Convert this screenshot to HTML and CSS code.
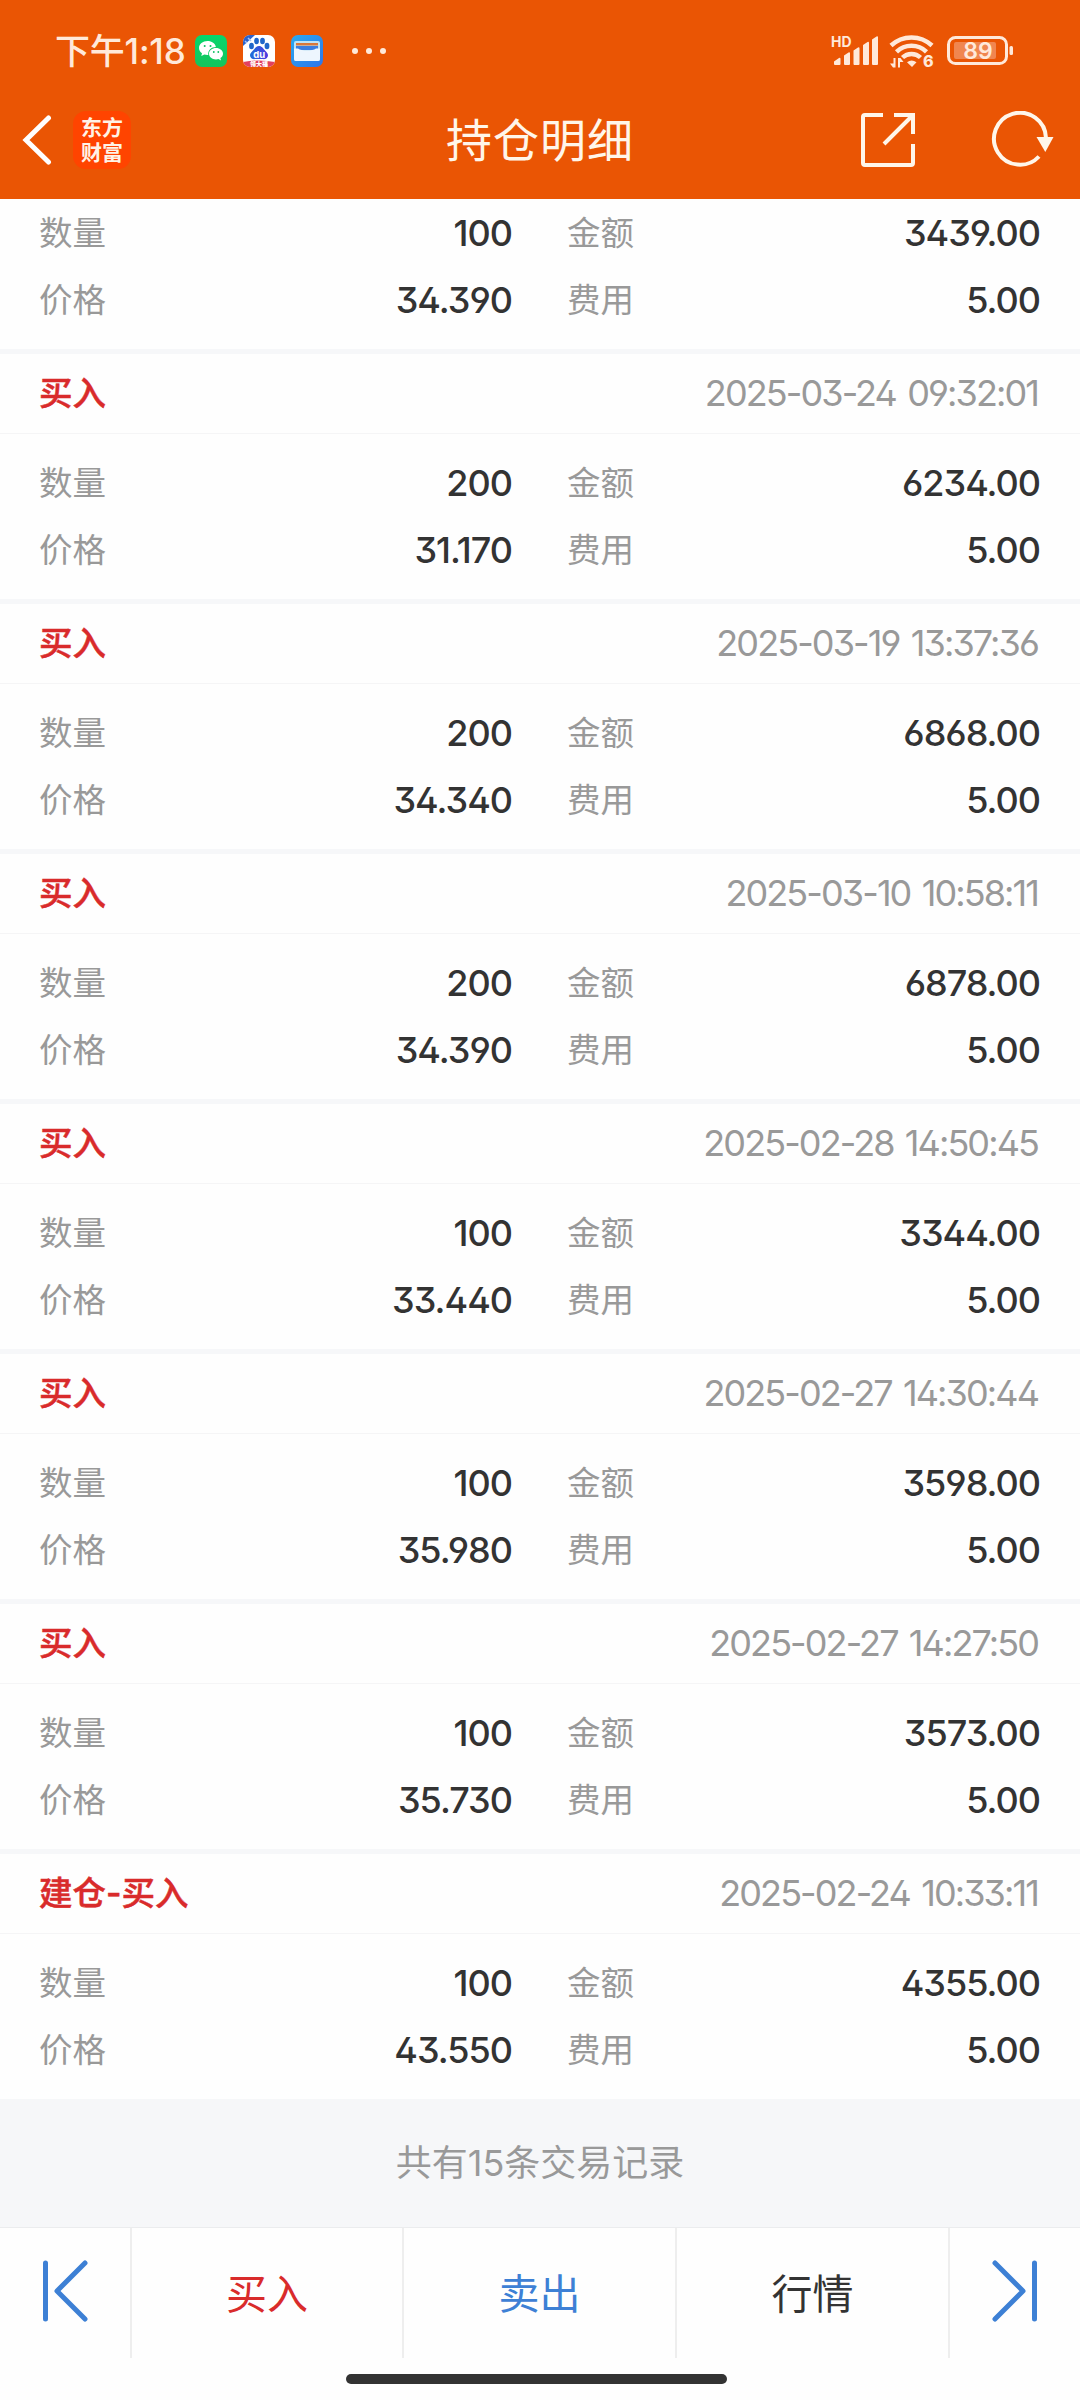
FILE: index.html
```html
<!DOCTYPE html>
<html lang="zh-CN">
<head>
<meta charset="utf-8">
<title>持仓明细</title>
<link rel="stylesheet" href="styles.css">
</head>
<body>
<header class="top">
  <div class="status">
    <span class="time">下午1:18</span>
    <svg class="app" viewBox="0 0 32 32"><defs><linearGradient id="wc" x2="0" y2="1"><stop stop-color="#05d76c"/><stop offset="1" stop-color="#14c45c"/></linearGradient></defs><rect width="32" height="32" rx="7" fill="url(#wc)"/><path d="M12.5 6C7.800 6 4 9.100 4 13c0 2.200 1.200 4 3 5.300L6.300 21l3-1.600c1 .3 2 .5 3.200.5h.8c-.7-4.500 3-7.900 7.600-7.900C20.300 8.500 16.700 6 12.500 6z" fill="#fff"/><path d="M21 13c-3.900 0-7 2.600-7 5.700s3.100 5.700 7 5.700c.9 0 1.700-.1 2.500-.4l2.500 1.400-.6-2.300c1.600-1.100 2.600-2.700 2.600-4.400 0-3.100-3.100-5.700-7-5.700z" fill="#fff"/><g fill="#0cc060"><circle cx="9.700" cy="11" r="1"/><circle cx="15.500" cy="11" r="1"/><circle cx="18.800" cy="17" r=".9"/><circle cx="23.300" cy="17" r=".9"/></g></svg>
    <svg class="app" viewBox="0 0 32 32"><defs><clipPath id="bd"><rect width="32" height="32" rx="7"/></clipPath><linearGradient id="bg" x2="1" y2="0"><stop stop-color="#1d6fd8"/><stop offset="1" stop-color="#5038e0"/></linearGradient></defs><g clip-path="url(#bd)"><rect width="32" height="32" fill="#fff"/><path d="M0 0h12L0 11z" fill="#2b62cc"/><path d="M2 6l2 2M5 3l3 3" stroke="#a8c5f5" stroke-width="1.500"/><g fill="#1f66c9"><ellipse cx="8.500" cy="11" rx="2.400" ry="3.200"/><ellipse cx="13.500" cy="6" rx="2.400" ry="3.300"/><ellipse cx="19.500" cy="6" rx="2.400" ry="3.300"/><ellipse cx="24" cy="11" rx="2.400" ry="3.200"/></g><path d="M16 11c3 0 4 2.500 6.500 5s3 4 2 6-3 2.400-5 2h-7c-2 .4-4 0-5-2s-.5-3.500 2-6S13 11 16 11z" fill="url(#bg)"/><path d="M0 27q16-3 32 0v5H0z" fill="#e2405e"/></g><text class="du" x="16.200" y="22.500">du</text><text class="tag" x="16" y="31">领大福</text></svg>
    <svg class="app" viewBox="0 0 32 32"><defs><linearGradient id="wl" x2="1" y2="1"><stop stop-color="#2aaaf0"/><stop offset="1" stop-color="#2d74ea"/></linearGradient></defs><rect width="32" height="32" rx="7" fill="url(#wl)"/><rect x="3" y="6" width="26" height="20" rx="2" fill="#bfe3f5"/><path d="M5 8h22v2.500H5z" fill="#d9773a"/><path d="M5 11h22v4H5z" fill="#3c7ee0"/><path d="M3 13.500h4q3 2 9 2t9-2h4V24q0 2-2 2H5q-2 0-2-2z" fill="#edf6fe"/></svg>
    <svg class="dots" viewBox="0 0 34 6"><g fill="#ffe9da"><circle cx="3" cy="3" r="3"/><circle cx="17" cy="3" r="3"/><circle cx="31" cy="3" r="3"/></g></svg>
    <svg class="signals" viewBox="0 0 184 34"><g fill="#ffe9da"><text class="hd" x="1" y="13">HD</text><path d="M4 27.500l5-3.500q1.500-.8 1.500 1V30q0 1-1 1H5q-1 0-1-1zM14 21.500l4.500-3q1.500-.8 1.500 1V30q0 1-1 1h-4q-1 0-1-1zM23.500 16.500l4.500-3q1.500-.8 1.500 1V30q0 1-1 1h-4q-1 0-1-1zM33 11l4.500-3q1.500-.8 1.500 1V30q0 1-1 1h-4q-1 0-1-1zM42 5.500l4.500-3q1.500-.8 1.500 1V30q0 1-1 1h-4q-1 0-1-1z"/></g>
      <g fill="none" stroke="#ffe9da" stroke-width="4.500"><path d="M61 11.500a30 30 0 0 1 41 0M66.500 17.800a21.500 21.500 0 0 1 30 0M72.500 23.500a13 13 0 0 1 18 0"/></g><path d="M77 28.200q4.500-3.500 9.500 0L82 33z" fill="#ffe9da"/><path d="M65.500 24v9.500h-2.500L60 29.500h3.500V24zM68 33.500V24h2.500l3 4H70v5.500z" fill="#ffe9da"/><text class="six" x="93" y="33">6</text>
      <rect x="118.500" y="3.500" width="58" height="26" rx="7" fill="none" stroke="#ffe9da" stroke-width="3"/><rect x="124" y="8" width="42" height="17" rx="2" fill="#f08650"/><rect x="179.500" y="12" width="3.500" height="9" rx="1.500" fill="#ffe9da"/><text class="pct" x="148" y="25">89</text></svg>
  </div>
  <div class="nav">
    <svg class="back" viewBox="0 0 30 50"><path d="M26.500 3L4 25l22.500 22" fill="none" stroke="#fff" stroke-width="5" stroke-linecap="round"/></svg>
    <div class="brand"><span>东方</span><span>财富</span></div>
    <h1 class="title">持仓明细</h1>
    <div class="actions">
      <svg class="share" viewBox="0 0 56 56"><g fill="none" stroke="#fff6ea" stroke-width="4"><path d="M23 3H5Q3 3 3 5v46q0 2 2 2h46q2 0 2-2V32"/><path d="M34 3h19v19M52 4L24 32"/></g></svg>
      <svg class="reload" viewBox="0 0 64 58"><path d="M49 45.500A26 26 0 1 1 56 27" fill="none" stroke="#fff6ea" stroke-width="4"/><path d="M46.500 26h17l-8.200 15z" fill="#fff6ea"/></svg>
    </div>
  </div>
</header>
<main class="list">
  <section class="record first"><dl class="body"><dt>数量</dt><dd>100</dd><dt>金额</dt><dd>3439.00</dd><dt>价格</dt><dd>34.390</dd><dt>费用</dt><dd>5.00</dd></dl></section>
  <section class="record"><div class="head"><b>买入</b><time>2025-03-24 09:32:01</time></div><dl class="body"><dt>数量</dt><dd>200</dd><dt>金额</dt><dd>6234.00</dd><dt>价格</dt><dd>31.170</dd><dt>费用</dt><dd>5.00</dd></dl></section>
  <section class="record"><div class="head"><b>买入</b><time>2025-03-19 13:37:36</time></div><dl class="body"><dt>数量</dt><dd>200</dd><dt>金额</dt><dd>6868.00</dd><dt>价格</dt><dd>34.340</dd><dt>费用</dt><dd>5.00</dd></dl></section>
  <section class="record"><div class="head"><b>买入</b><time>2025-03-10 10:58:11</time></div><dl class="body"><dt>数量</dt><dd>200</dd><dt>金额</dt><dd>6878.00</dd><dt>价格</dt><dd>34.390</dd><dt>费用</dt><dd>5.00</dd></dl></section>
  <section class="record"><div class="head"><b>买入</b><time>2025-02-28 14:50:45</time></div><dl class="body"><dt>数量</dt><dd>100</dd><dt>金额</dt><dd>3344.00</dd><dt>价格</dt><dd>33.440</dd><dt>费用</dt><dd>5.00</dd></dl></section>
  <section class="record"><div class="head"><b>买入</b><time>2025-02-27 14:30:44</time></div><dl class="body"><dt>数量</dt><dd>100</dd><dt>金额</dt><dd>3598.00</dd><dt>价格</dt><dd>35.980</dd><dt>费用</dt><dd>5.00</dd></dl></section>
  <section class="record"><div class="head"><b>买入</b><time>2025-02-27 14:27:50</time></div><dl class="body"><dt>数量</dt><dd>100</dd><dt>金额</dt><dd>3573.00</dd><dt>价格</dt><dd>35.730</dd><dt>费用</dt><dd>5.00</dd></dl></section>
  <section class="record"><div class="head"><b>建仓-买入</b><time>2025-02-24 10:33:11</time></div><dl class="body"><dt>数量</dt><dd>100</dd><dt>金额</dt><dd>4355.00</dd><dt>价格</dt><dd>43.550</dd><dt>费用</dt><dd>5.00</dd></dl></section>
</main>
<p class="total">共有15条交易记录</p>
<nav class="tabs">
  <a class="tab"><svg class="step" viewBox="0 0 46 64"><path d="M3.500 4v56M43 4L15 32l28 28" fill="none" stroke="#3d80d5" stroke-width="5" stroke-linecap="round" stroke-linejoin="round"/></svg></a>
  <a class="tab buy">买入</a>
  <a class="tab sell">卖出</a>
  <a class="tab">行情</a>
  <a class="tab"><svg class="step" viewBox="0 0 46 64"><path d="M42.500 4v56M3 4l28 28L3 60" fill="none" stroke="#3d80d5" stroke-width="5" stroke-linecap="round" stroke-linejoin="round"/></svg></a>
</nav>
<div class="home"></div>
</body>
</html>
```
FILE: styles.css
```css
* { box-sizing: border-box; margin: 0; padding: 0; }
body {
  width: 1080px; height: 2400px; overflow: hidden;
  display: flex; flex-direction: column;
  background: #fefefe; color: #333;
  font-family: Inter, "Noto Sans CJK SC", sans-serif;
  font-feature-settings: "cv09", "ss01";
}
svg { display: block; flex: none; }
.top { height: 199px; background: #ea5504; color: #fff6ea; }
.status { height: 82px; padding: 20px 66px 0 55px; display: flex; align-items: center; }
.time { width: 140px; font-size: 35px; font-weight: 500; line-height: 40px; letter-spacing: -.2px; white-space: nowrap; color: #ffe9da; }
.app { width: 32px; height: 32px; margin-right: 16px; }
.dots { width: 34px; height: 6px; margin-left: 13px; }
.signals { width: 184px; height: 34px; margin-left: auto; overflow: visible; }
.du { font: 700 9.5px Inter, sans-serif; fill: #fff; text-anchor: middle; }
.tag { font: 900 6px "Noto Sans CJK SC", sans-serif; fill: #fff; text-anchor: middle; }
.hd { font: 700 14px/1 Inter, sans-serif; }
.six { font: 800 16px Inter, sans-serif; fill: #ffe9da; }
.pct { font: 600 23px Inter, sans-serif; fill: #ffe9da; text-anchor: middle; }
.nav { height: 116px; padding: 0 26px 0 22px; display: grid; grid-template-columns: 198px 1fr 194px; grid-template-areas: "left title actions"; align-items: center; }
.back { grid-area: left; width: 30px; height: 50px; }
.brand { grid-area: left; width: 58px; height: 58px; margin-left: 51px; display: flex; flex-direction: column; align-items: center; justify-content: center; gap: 4px; padding-bottom: 2px; border-radius: 13px; background: #ff4400; color: #fff3e6; font: 700 21px/21px "Noto Sans CJK SC", sans-serif; }
.title { grid-area: title; text-align: center; font-size: 46px; font-weight: 400; letter-spacing: 1px; line-height: 60px; padding-bottom: 1px; }
.actions { grid-area: actions; display: flex; gap: 74px; align-items: center; }
.share { width: 56px; height: 56px; }
.reload { width: 64px; height: 58px; }
.record { border-top: 5px solid #f6f7f9; height: 250px; }
.record.first { height: 150px; border-top: 0; }
.head { height: 80px; padding: 0 40px 0 39px; display: flex; align-items: center; justify-content: space-between; border-bottom: 1px solid #f5f5f6; }
.head b { padding-bottom: 2px; color: #d92b2b; font-size: 33.500px; font-weight: 500; line-height: 50px; -webkit-text-stroke: .5px #d92b2b; }
.head time { color: #999; font-size: 36px; letter-spacing: -1.900px; word-spacing: 3px; padding: 0 2px 1px 0; }
.body { padding: 15px 40px 0 39px; display: grid; grid-template: 67px 67px / 90px 383px 145px 1fr; align-items: center; }
.first .body { padding-top: 0; }
.body dt { color: #999; font-size: 33.500px; line-height: 50px; }
.body dt:nth-of-type(even) { padding-left: 55px; }
.body dd { font-size: 36px; font-weight: 500; text-align: right; letter-spacing: -1px; }
.total { height: 128px; background: #f6f7f9; color: #999; text-align: center; font-size: 36px; line-height: 128px; }
.tabs { height: 131px; border-top: 1px solid #ebecee; display: grid; grid-template-columns: 132px 272px 273px 273px 130px; }
.tab { display: flex; align-items: center; justify-content: center; border-right: 2px solid #eee; padding-bottom: 5px; font-size: 41px; }
.tab:last-child { border-right: 0; }
.buy { color: #d92b2b; }
.sell { color: #3d80d5; }
.step { width: 46px; height: 64px; }
.home { width: 381px; height: 10px; margin: 16px 0 0 346px; border-radius: 5px; background: #333; }
```
